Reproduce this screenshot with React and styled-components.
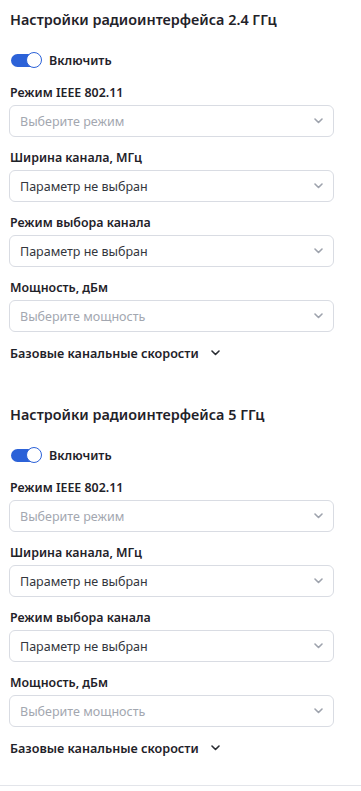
import React from "react";
import styled, { createGlobalStyle } from "styled-components";

const GlobalStyle = createGlobalStyle`
  body {
    margin: 0;
    background: #ffffff;
    font-family: "Noto Sans", "Open Sans", sans-serif;
    color: #1f2229;
  }
`;

const Page = styled.div`
  width: 361px;
  padding-bottom: 28px;
  border-bottom: 1px solid #e3e5ea;
`;

const Section = styled.section`
  padding: 10px 27px 0 9px;
  display: flex;
  flex-direction: column;
  & + & {
    margin-top: 33px;
  }
`;

const Title = styled.h2`
  margin: 0 0 0 1px;
  font-size: 14.4px;
  line-height: 20px;
  font-weight: 600;
`;

const ToggleRow = styled.label`
  display: flex;
  align-items: center;
  gap: 8px;
  height: 20px;
  margin: 20px 0 14px 2px;
  font-size: 12.5px;
  font-weight: 600;
`;

const Track = styled.span`
  position: relative;
  width: 30px;
  height: 13px;
  border-radius: 7px;
  background: ${(p) => (p.$on ? "#2c62d8" : "#c9ccd4")};
`;

const Knob = styled.span`
  position: absolute;
  top: -2px;
  ${(p) => (p.$on ? "right: -1px;" : "left: -1px;")}
  width: 14px;
  height: 14px;
  border-radius: 50%;
  background: #fff;
  border: 1.5px solid #2c62d8;
`;

const Field = styled.div`
  display: flex;
  flex-direction: column;
  gap: 3px;
  margin-bottom: 12px;
`;

const Label = styled.div`
  margin-left: 1px;
  font-size: 12.4px;
  line-height: 18px;
  font-weight: 600;
`;

const Select = styled.div`
  height: 32px;
  box-sizing: border-box;
  border: 1px solid #d9dce3;
  border-radius: 6px;
  display: flex;
  align-items: center;
  justify-content: space-between;
  padding: 0 10px 0 10px;
  font-size: 12.5px;
  color: ${(p) => (p.$placeholder ? "#a3a7b0" : "#33363d")};
`;

const Expander = styled.div`
  display: flex;
  align-items: center;
  gap: 12px;
  height: 18px;
  margin-left: 1px;
  font-size: 12.6px;
  font-weight: 600;
`;

const Chevron = ({ color }) => (
  <svg width="9" height="6" viewBox="0 0 9 6" fill="none">
    <path
      d="M1 1l3.5 3.5L8 1"
      stroke={color}
      strokeWidth="1.6"
      strokeLinecap="round"
      strokeLinejoin="round"
    />
  </svg>
);

const fields = [
  { label: "Режим IEEE 802.11", value: "Выберите режим", placeholder: true },
  { label: "Ширина канала, МГц", value: "Параметр не выбран" },
  { label: "Режим выбора канала", value: "Параметр не выбран" },
  { label: "Мощность, дБм", value: "Выберите мощность", placeholder: true },
];

const RadioSection = ({ band }) => (
  <Section>
    <Title>Настройки радиоинтерфейса {band}</Title>
    <ToggleRow>
      <Track $on>
        <Knob $on />
      </Track>
      Включить
    </ToggleRow>
    {fields.map((f) => (
      <Field key={f.label}>
        <Label>{f.label}</Label>
        <Select $placeholder={f.placeholder}>
          {f.value}
          <Chevron color="#9ea3ad" />
        </Select>
      </Field>
    ))}
    <Expander>
      Базовые канальные скорости
      <Chevron color="#2a2d33" />
    </Expander>
  </Section>
);

export default function App() {
  return (
    <>
      <GlobalStyle />
      <Page>
        <RadioSection band="2.4 ГГц" />
        <RadioSection band="5 ГГц" />
      </Page>
    </>
  );
}
